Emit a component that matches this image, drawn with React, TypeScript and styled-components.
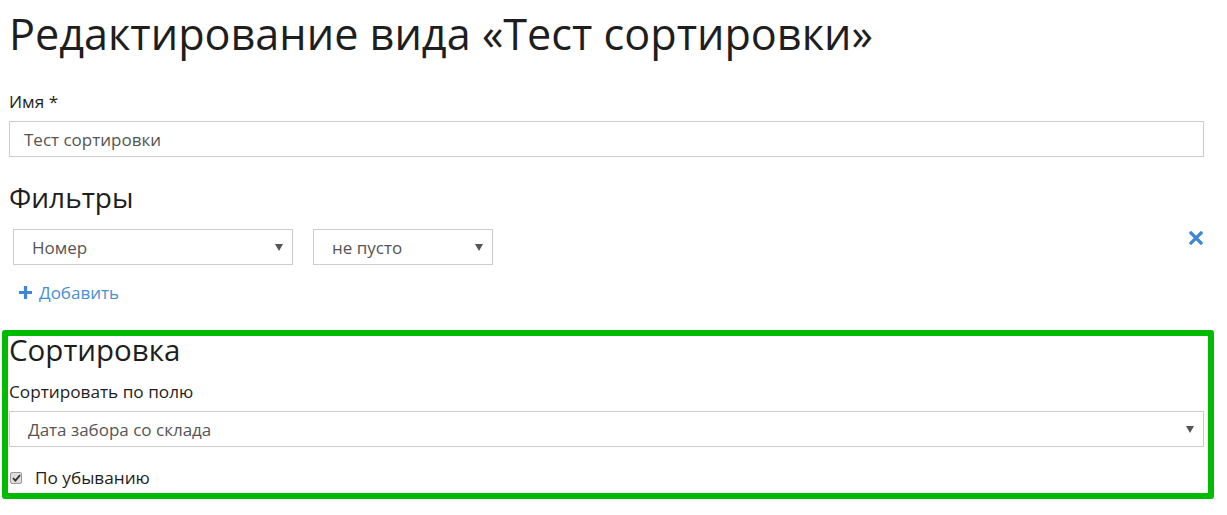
import styled, { createGlobalStyle } from "styled-components";

const GlobalStyle = createGlobalStyle`
  body {
    margin: 0;
    background: #fff;
    font-family: "Open Sans", Lato, sans-serif;
    color: #1a1a1a;
  }
`;

const Arrow = () => (
  <svg width="8" height="7" viewBox="0 0 8 7">
    <path d="M0 0 H8 L4 7 Z" fill="#555" />
  </svg>
);

function Select({ value, width }: { value: string; width?: number }) {
  return (
    <SelectBox $width={width}>
      <span>{value}</span>
      <Arrow />
    </SelectBox>
  );
}

export default function App() {
  return (
    <Page>
      <GlobalStyle />
      <Title>Редактирование вида «Тест сортировки»</Title>

      <Label>Имя *</Label>
      <Input>Тест сортировки</Input>

      <Heading>Фильтры</Heading>
      <FilterRow>
        <Select value="Номер" width={280} />
        <Select value="не пусто" width={180} />
        <RemoveButton>
          <svg width="14" height="14" viewBox="0 0 14 14">
            <path d="M2 2 L12 12 M12 2 L2 12" stroke="#3d87d6" strokeWidth="3.2" strokeLinecap="square" />
          </svg>
        </RemoveButton>
      </FilterRow>
      <AddLink>
        <svg width="15" height="15" viewBox="0 0 15 15">
          <path d="M7.5 1 V14 M1 7.5 H14" stroke="#3d87d6" strokeWidth="3.2" />
        </svg>
        Добавить
      </AddLink>

      <SortSection>
        <Heading $tight>Сортировка</Heading>
        <Label>Сортировать по полю</Label>
        <Select value="Дата забора со склада" />
        <CheckRow>
          <CheckBox>
            <svg width="9" height="8" viewBox="0 0 9 8">
              <path d="M1 4.2 L3.4 6.6 L8 1.2" stroke="#333" strokeWidth="1.8" fill="none" />
            </svg>
          </CheckBox>
          По убыванию
        </CheckRow>
      </SortSection>
    </Page>
  );
}

const Page = styled.div`
  width: 1195px;
  padding: 6px 0 0 9px;
`;

const Title = styled.h1`
  margin: 0 0 30px 0;
  font-size: 43.2px;
  font-weight: 400;
  line-height: 56px;
  color: #1e1e1e;
`;

const Label = styled.div`
  font-size: 17.2px;
  line-height: 20px;
  font-weight: 500;
  color: #1e1e1e;
  margin: 0 0 9px 0;
`;

const Input = styled.div`
  height: 36px;
  box-sizing: border-box;
  border: 1px solid #ccc;
  padding: 0 14px;
  display: flex;
  align-items: center;
  font-size: 17px;
  color: #555;
`;

const Heading = styled.h2<{ $tight?: boolean }>`
  margin: ${(p) => (p.$tight ? "0 0 18px 0" : "22px 0 14px 0")};
  font-size: ${(p) => (p.$tight ? "29.5px" : "28px")};
  font-weight: 400;
  line-height: ${(p) => (p.$tight ? "28px" : "36px")};
  color: #1e1e1e;
`;

const SelectBox = styled.div<{ $width?: number }>`
  width: ${(p) => (p.$width ? `${p.$width}px` : "auto")};
  height: 36px;
  box-sizing: border-box;
  border: 1px solid #ccc;
  padding: 0 9px 0 18px;
  display: flex;
  align-items: center;
  justify-content: space-between;
  font-size: 17px;
  color: #555;
  background: #fff;
`;

const FilterRow = styled.div`
  display: flex;
  align-items: center;
  gap: 20px;
  padding-left: 4px;
`;

const RemoveButton = styled.div`
  margin-left: auto;
  margin-right: 1px;
  display: flex;
  align-self: flex-start;
  padding-top: 2px;
`;

const AddLink = styled.div`
  display: flex;
  align-items: center;
  gap: 6px;
  margin: 16px 0 0 9px;
  font-size: 17px;
  color: #4a8fd6;
`;

const SortSection = styled.section`
  margin: 26px -10px 0 -7px;
  border: 6px solid #00bb00;
  border-radius: 3px;
  padding: 0 4px 4px 1px;
`;

const CheckRow = styled.div`
  display: flex;
  align-items: center;
  gap: 13px;
  margin-top: 19px;
  margin-left: 1px;
  font-size: 17.2px;
  font-weight: 500;
  color: #1e1e1e;
`;

const CheckBox = styled.span`
  width: 12px;
  height: 12px;
  box-sizing: border-box;
  border: 1px solid #999;
  border-radius: 2px;
  background: #ddd;
  display: flex;
  align-items: center;
  justify-content: center;
`;
